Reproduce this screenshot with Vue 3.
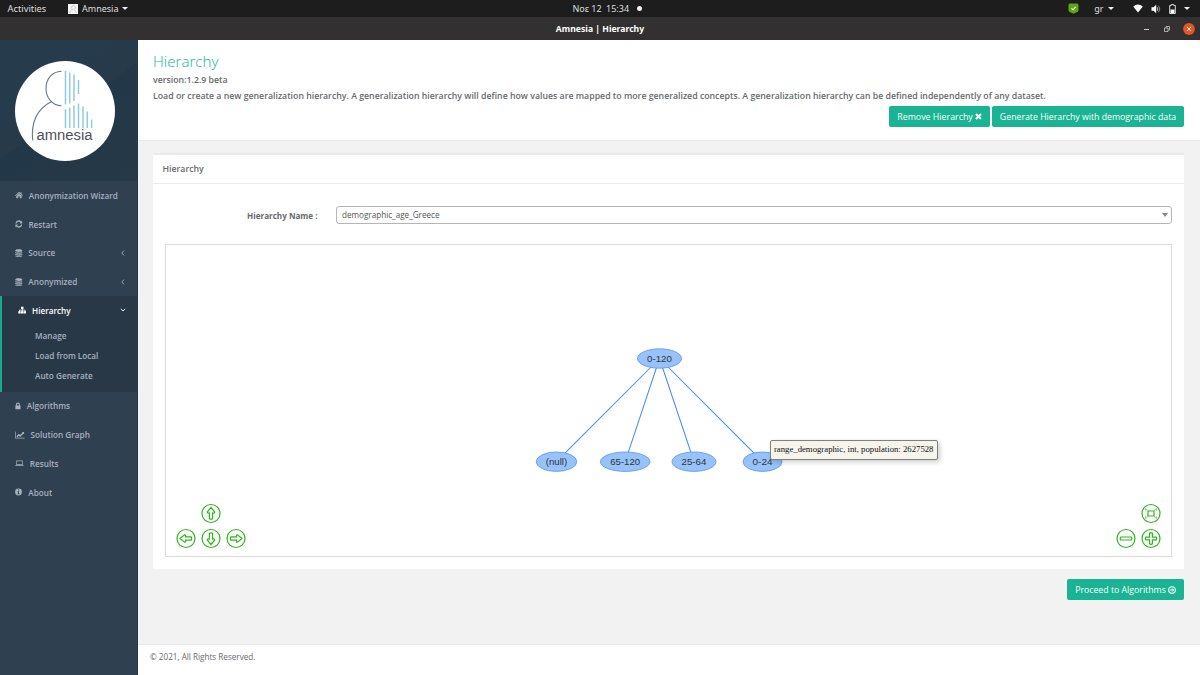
<template>
  <div class="desktop">
    <header class="topbar">
      <div class="topbar-left">
        <span class="activities">Activities</span>
        <svg class="app-icon" viewBox="0 0 10 10">
          <rect width="10" height="10" fill="#f4f4f4" />
          <path d="M5.500 1.500a2 2 0 0 0-.8 3.800C2.800 6 2 7 1.800 9M5.500 1.500c3 1 2 3 .5 4L8.500 8.500" fill="none" stroke="#bbb" stroke-width=".7" />
        </svg>
        <span class="app-name">Amnesia</span>
        <i class="caret"></i>
      </div>
      <div class="clock">
        <span class="clock-date">Νοε 12</span>
        <span class="clock-time">15:34</span>
        <i class="dot"></i>
      </div>
      <div class="tray">
        <svg class="shield" viewBox="0 0 11 11">
          <path d="M2 .5h7Q10.500.5 10.500 2v5.500Q10 9.500 7.500 9.800L5.500 10.800 3.500 9.800Q1 9.500.5 7.500V2Q.5.500 2 .5z" fill="#5fa614" />
          <path d="M3.500 5.300l1.500 1.500 2.700-3" fill="none" stroke="#fff" stroke-width="1.100" />
        </svg>
        <span class="lang">gr</span>
        <i class="caret"></i>
        <svg class="wifi" viewBox="0 0 10 9"><path d="M.2 2.500Q5-1.500 9.800 2.500L5 8.500z" fill="#fff" /></svg>
        <svg class="volume" viewBox="0 0 10 10">
          <path d="M.5 3.200h2L5.200.8v8.400L2.500 6.800h-2z" fill="#fff" />
          <path d="M6.200 3.200q1.300 1.800 0 3.600" fill="none" stroke="#ddd" stroke-width=".9" />
          <path d="M7.500 1.700q2.600 3.300 0 6.600" fill="none" stroke="#999" stroke-width=".9" />
        </svg>
        <svg class="battery" viewBox="0 0 7 10">
          <path d="M2.300.5h2.400v1H6.300v8H.7v-8h1.600z" fill="none" stroke="#ddd" />
          <path d="M1.500 5.500h4v3.500h-4z" fill="#fff" />
        </svg>
        <i class="caret"></i>
      </div>
    </header>

    <div class="titlebar">
      <span class="window-title">Amnesia | Hierarchy</span>
      <div class="window-buttons">
        <i class="minimize"></i>
        <svg class="restore" viewBox="0 0 6 6">
          <path d="M.5 2h3.500v3.500H.5zM2 1.800V.5h3.500V4H4.300" fill="none" stroke="#ccc" stroke-width=".8" />
        </svg>
        <svg class="close" viewBox="0 0 12 12">
          <circle cx="6" cy="6" r="5.900" fill="#e95420" />
          <path d="M4 4l4 4M8 4L4 8" stroke="#fff" stroke-width="1" />
        </svg>
      </div>
    </div>

    <div class="window">
      <nav class="sidebar">
        <div class="profile">
          <svg class="logo" viewBox="0 0 100 100">
            <circle cx="50" cy="50" r="50" fill="#fff" />
            <g fill="none" stroke="#64798a" stroke-width="1.100">
              <path d="M46.500 10.200C37 10.500 31 18 31 27.500S37.500 44.500 46.500 44.700" />
              <path d="M36.500 40.500C24 47 15.500 58 17.700 79.500" />
            </g>
            <path
              v-for="bar in logoBars"
              :key="bar"
              :d="bar"
              stroke="#8fcbe2"
              stroke-width="1.500"
            />
            <text x="21.500" y="79" textLength="56" lengthAdjust="spacingAndGlyphs">amnesia</text>
          </svg>
        </div>
        <ul class="menu">
          <li v-for="item in menu" :key="item.label" :class="{ active: item.children }">
            <a class="menu-link">
              <svg class="menu-icon" :style="{ width: item.width + 'px' }" :viewBox="`0 0 ${item.width} 8`">
                <path :d="icons[item.icon]" fill="currentColor" fill-rule="evenodd" />
              </svg>
              <span>{{ item.label }}</span>
              <svg v-if="item.arrow" class="arrow" viewBox="0 0 6 6">
                <path :d="item.arrow === 'down' ? 'M.8 1.800L3 4l2.200-2.200' : 'M4 .6L1.800 3 4 5.400'" fill="none" stroke="currentColor" stroke-width=".9" />
              </svg>
            </a>
            <ul v-if="item.children" class="submenu">
              <li v-for="child in item.children" :key="child">{{ child }}</li>
            </ul>
          </li>
        </ul>
      </nav>

      <main class="page">
        <section class="heading">
          <h2>Hierarchy</h2>
          <p class="version">version:1.2.9 beta</p>
          <p class="intro">Load or create a new generalization hierarchy. A generalization hierarchy will define how values are mapped to more generalized concepts. A generalization hierarchy can be defined independently of any dataset.</p>
          <div class="actions">
            <button class="btn remove">
              <span>Remove Hierarchy</span>
              <svg class="btn-x" viewBox="0 0 7 7"><path d="M1 1l5 5M6 1L1 6" stroke="#fff" stroke-width="2" /></svg>
            </button>
            <button class="btn generate">Generate Hierarchy with demographic data</button>
          </div>
        </section>

        <section class="content">
          <div class="panel">
            <div class="panel-title">Hierarchy</div>
            <div class="panel-body">
              <div class="form-row">
                <label>Hierarchy Name :</label>
                <div class="select">
                  <span>demographic_age_Greece</span>
                  <i class="select-caret"></i>
                </div>
              </div>
              <div class="network">
                <svg class="graph" viewBox="0 0 1005 311">
                  <line
                    v-for="node in leaves"
                    :key="'edge' + node.label"
                    :x1="root.x"
                    :y1="root.y"
                    :x2="node.x"
                    :y2="node.y"
                  />
                  <g v-for="node in [root, ...leaves]" :key="node.label">
                    <ellipse :cx="node.x" :cy="node.y" :rx="node.rx" ry="9.700" />
                    <text :x="node.x" :y="node.y + 3.200" :textLength="node.text" lengthAdjust="spacingAndGlyphs">{{ node.label }}</text>
                  </g>
                  <g v-for="nav in navButtons" :key="nav.name" :transform="`translate(${nav.x} ${nav.y})`" class="nav">
                    <circle r="9" />
                    <path :d="nav.path" :transform="`rotate(${nav.rotate || 0})`" />
                    <path v-if="nav.corners" :d="nav.corners" class="corners" />
                  </g>
                </svg>
                <div class="tooltip">range_demographic, int, population: 2627528</div>
              </div>
            </div>
          </div>
          <div class="proceed-row">
            <button class="btn proceed">
              <span>Proceed to Algorithms</span>
              <svg class="btn-arrow" viewBox="0 0 8 8">
                <circle cx="4" cy="4" r="3.300" fill="none" stroke="#fff" stroke-width="1.100" />
                <path d="M1.900 4h3.500M4 2.300L5.700 4 4 5.700" fill="none" stroke="#fff" stroke-width="1" />
              </svg>
            </button>
          </div>
        </section>

        <footer class="footer">© 2021, All Rights Reserved.</footer>
      </main>
    </div>
  </div>
</template>

<script setup>
const icons = {
  home: 'M4 .8L5.600 2.300V1.200h1v2L8 4.500l-.5.5L4 1.900.5 5 0 4.500zM4 2.600l2.700 2.500v2.200H4.800V5.200H3.200v2.100H1.300V5.100z',
  refresh: 'M.4 3.500C.8 0 5-.5 6.200 1.500L7.200.7v2.800H4.500l.9-1C4.500 1 2 1.500 1.600 3.500zM7.200 4.500C6.800 8 2.600 8.500 1.400 6.500l-1 .8V4.500h2.700l-.9 1C3.100 7 5.600 6.500 6 4.500z',
  database: 'M.3 1.300C.3-.2 7.200-.2 7.200 1.300v.8C7.200 3.300.3 3.300.3 2.100zM.3 2.900c1 .9 5.900.9 6.900 0v1.100C7.200 5.100.3 5.100.3 4zM.3 4.800c1 .8 5.900.8 6.900 0v1C7.200 6.900.3 6.900.3 5.800zM.3 6.500c1 .9 5.900.9 6.900 0v.4C7.200 8.300.3 8.300.3 6.900z',
  sitemap: 'M3 .8h2.500v2.300h-.8v.6h2.700v1.500h.8v2.200H5.800V5.200h.8v-.7H4.700v.7h.8v2.200H3V5.200h.8v-.7H1.900v.7h.8v2.200H.3V5.200h.8V3.700h2.700v-.6H3z',
  lock: 'M.4 3.600h.5V2.700C.9-.1 4.900-.1 4.900 2.700v.9h.6v3.700H.4zM1.900 3.600h2V2.700c0-1.400-2-1.400-2 0z',
  chart: 'M.2.8H.9v6h8.700v.7H.2zM1.500 5.200l2.300-2.400 1.300 1.300 2.400-2.400-.7-.7h2.300v2.300l-.7-.6-3.300 3.200-1.300-1.200-1.600 1.800z',
  laptop: 'M1.300 1.500h6.400v4.400H1.300zM2 2.200v3h5v-3zM.3 6.300h8.400v.8H.3z',
  info: 'M3.500.6a3.400 3.400 0 1 1 0 6.800 3.400 3.400 0 0 1 0-6.800zM3 1.500v1h1v-1zM2.500 3.200v.7H3v1.700h-.5v.7h2v-.7H4V3.200z'
}

const menu = [
  { label: 'Anonymization Wizard', icon: 'home', width: 8 },
  { label: 'Restart', icon: 'refresh', width: 7.6 },
  { label: 'Source', icon: 'database', width: 7.5, arrow: 'left' },
  { label: 'Anonymized', icon: 'database', width: 7.5, arrow: 'left' },
  {
    label: 'Hierarchy',
    icon: 'sitemap',
    width: 8.5,
    arrow: 'down',
    children: ['Manage', 'Load from Local', 'Auto Generate']
  },
  { label: 'Algorithms', icon: 'lock', width: 6 },
  { label: 'Solution Graph', icon: 'chart', width: 9.7 },
  { label: 'Results', icon: 'laptop', width: 9 },
  { label: 'About', icon: 'info', width: 7.5 }
]

const logoBars = [
  'M50.500 9.800V43.500', 'M54.700 11.500V42.500', 'M59 13.800V40', 'M63.500 19V33',
  'M50.500 48V67', 'M54.700 46.500V67', 'M59 44.500V67', 'M63.500 42.500V67',
  'M68 45.500V67', 'M72.300 50.500V67', 'M76.600 58.500V67'
]

const root = { label: '0-120', x: 493.5, y: 113.5, rx: 22, text: 25 }
const leaves = [
  { label: '(null)', x: 390.5, y: 216.7, rx: 20.3, text: 21.5 },
  { label: '65-120', x: 459.2, y: 216.7, rx: 24.8, text: 30 },
  { label: '25-64', x: 528, y: 216.7, rx: 22, text: 25 },
  { label: '0-24', x: 596.5, y: 216.7, rx: 19.5, text: 20 }
]

const arrow = 'M0-6L3.700-1.500Q3.600 0 1.600-.4V5.200Q0 6.200-1.600 5.200V-.4Q-3.600 0-3.700-1.500z'
const navButtons = [
  { name: 'up', x: 45, y: 268.5, path: arrow },
  { name: 'left', x: 20, y: 293.5, path: arrow, rotate: -90 },
  { name: 'down', x: 45, y: 293.5, path: arrow, rotate: 180 },
  { name: 'right', x: 70, y: 293.5, path: arrow, rotate: 90 },
  { name: 'out', x: 960, y: 293.5, path: 'M-5.200-1.500H5.200Q6.600 0 5.200 1.500H-5.200Q-6.600 0-5.200-1.500z' },
  { name: 'in', x: 985, y: 293.5, path: 'M-1.400-5.200Q0-6.400 1.400-5.200V-1.400H5.200Q6.400 0 5.200 1.400H1.400V5.200Q0 6.400-1.400 5.200V1.400H-5.200Q-6.400 0-5.200-1.400H-1.400z' },
  { name: 'fit', x: 985, y: 268.5, path: 'M-3-2.500H3V2.500H-3z', corners: 'M-5.500-2.800V-5L-3-3M5.500-2.800V-5L3-3M-5.500 2.800V5L-3 3M5.500 2.800V5L3 3' }
]
</script>

<style>
body {
  margin: 0;
  overflow: hidden;
}
</style>

<style scoped>
* {
  box-sizing: border-box;
}
.desktop {
  width: 1200px;
  height: 675px;
  display: flex;
  flex-direction: column;
  font-family: "Open Sans", sans-serif;
  font-size: 8.75px;
  color: #676a6c;
}
svg {
  display: block;
  flex: none;
}
h2,
p,
ul {
  margin: 0;
  padding: 0;
  list-style: none;
}
.topbar {
  height: 17px;
  flex: none;
  display: grid;
  grid-template-columns: 1fr auto 1fr;
  align-items: center;
  background: #1d1d1d;
  color: #dedede;
  font-family: "Noto Sans", sans-serif;
  font-size: 9px;
  white-space: nowrap;
}
.topbar-left,
.clock,
.tray {
  display: flex;
  align-items: center;
}
.topbar-left {
  padding-left: 7.5px;
}
.activities {
  width: 60.5px;
  font-size: 9.3px;
}
.app-icon {
  width: 10px;
  height: 10px;
  margin-right: 4px;
}
.caret {
  border: 3px solid transparent;
  border-top: 3.5px solid #f0f0f0;
  border-bottom: 0;
}
.app-name {
  margin-right: 3px;
}
.clock {
  padding-left: 14px;
}
.clock-time {
  margin-left: 4.5px;
}
.dot {
  width: 5px;
  height: 5px;
  margin-left: 7.5px;
  border-radius: 50%;
  background: #f2f2f2;
}
.tray {
  justify-content: flex-end;
  padding-right: 10px;
}
.shield {
  width: 11px;
  height: 11px;
  margin-right: 15px;
}
.lang {
  margin-right: 4px;
}
.wifi {
  width: 10px;
  height: 9px;
  margin: 0 8px 0 19.5px;
}
.volume {
  width: 10px;
  height: 10px;
  margin-right: 8px;
}
.battery {
  width: 7px;
  height: 10px;
  margin-right: 8px;
}
.titlebar {
  height: 23px;
  flex: none;
  display: grid;
  grid-template-columns: 1fr auto 1fr;
  align-items: center;
  background: #323030;
  color: #fff;
}
.window-title {
  grid-column: 2;
  font: bold 8.65px "Noto Sans", sans-serif;
}
.window-buttons {
  display: flex;
  justify-content: flex-end;
  align-items: center;
  padding-right: 5.5px;
}
.minimize {
  width: 5px;
  height: 1px;
  margin: 2px 15.5px 0 0;
  background: #ccc;
}
.restore {
  width: 6px;
  height: 6px;
  margin-right: 12.5px;
}
.close {
  width: 12px;
  height: 12px;
}
.window {
  flex: 1;
  display: flex;
  min-height: 0;
}
.sidebar {
  width: 137.5px;
  flex: none;
  background: #2f4050;
  border-right: 1px solid #263849;
}
.profile {
  height: 141px;
  padding: 20.5px 0 0 15.4px;
  background: linear-gradient(145deg, #263c4d, #263a4a 50%, #223747 50.5%, #263949);
}
.logo {
  width: 100px;
  height: 100px;
}
.logo text {
  font: 15.5px "Liberation Sans", sans-serif;
  fill: #50505a;
}
.menu {
  color: #a7b1c2;
  font-weight: 600;
  font-size: 8.2px;
}
.menu-link {
  height: 28.75px;
  display: flex;
  align-items: center;
  padding: 0 10.5px 0 15px;
}
.menu-icon {
  height: 8px;
  margin-right: 5.8px;
}
.arrow {
  width: 6px;
  height: 6px;
  margin-left: auto;
}
.active {
  height: 95.5px;
  border-left: 2.5px solid #19aa8d;
  background: #293846;
}
.active .menu-link {
  padding-left: 15.7px;
  color: #fff;
}
.submenu {
  padding-left: 33px;
  color: #a7b1c2;
}
.submenu li {
  height: 20px;
  line-height: 21px;
}
.page {
  flex: 1;
  display: flex;
  flex-direction: column;
  min-width: 0;
  background: #f2f2f2;
}
.heading {
  height: 100.5px;
  flex: none;
  padding: 11px 16px 0 15.5px;
  background: #fff;
  border-bottom: 1px solid #e7eaec;
}
h2 {
  font-size: 15.1px;
  font-weight: 300;
  line-height: 21px;
  color: #1ab394;
}
.version,
.intro {
  font-weight: 600;
  line-height: 16px;
  white-space: nowrap;
}
.actions {
  display: flex;
  justify-content: flex-end;
  gap: 2px;
  margin-top: 2.2px;
}
.btn {
  height: 21px;
  display: flex;
  align-items: center;
  justify-content: center;
  gap: 2px;
  padding: 0;
  border: 0;
  border-radius: 2px;
  background: #1ab394;
  color: #fff;
  font: 8.75px "Open Sans", sans-serif;
  white-space: nowrap;
}
.remove {
  width: 101px;
  font-size: 8.85px;
}
.generate {
  width: 192px;
}
.btn-x {
  width: 7px;
  height: 7px;
}
.content {
  flex: 1;
  padding: 12.5px 16px 0 15.5px;
}
.panel {
  height: 416px;
  background: #fff;
  border-top: 2px solid #e7eaec;
}
.panel-title {
  height: 28.5px;
  line-height: 28.5px;
  padding-left: 9.5px;
  border-bottom: 1px solid #e9ebed;
  font-weight: 600;
}
.panel-body {
  padding: 22px 12px 0 12.5px;
}
.form-row {
  height: 38px;
  display: flex;
  align-items: flex-start;
}
label {
  width: 170.5px;
  padding-right: 18.5px;
  text-align: right;
  font-size: 8.1px;
  font-weight: 700;
  line-height: 20px;
}
.select {
  flex: 1;
  height: 18px;
  display: flex;
  align-items: center;
  justify-content: space-between;
  padding: 0 3.5px 0 5px;
  border: 1px solid #b5b5b5;
  border-radius: 3px;
  color: #555;
  font-size: 8.15px;
}
.select-caret {
  border: 3px solid transparent;
  border-top: 4px solid #888;
  border-bottom: 0;
}
.network {
  position: relative;
  height: 313px;
  margin-left: -.6px;
  border: 1px solid #dadada;
}
.graph {
  width: 1005px;
  height: 311px;
}
.graph line {
  stroke: #4387f0;
  stroke-width: 1.01;
}
.graph ellipse {
  fill: #97c2fc;
  stroke: #5a91ed;
  stroke-width: .8;
}
.graph text {
  font: 9.5px "Liberation Sans", sans-serif;
  fill: #343434;
  text-anchor: middle;
}
.nav circle,
.nav path {
  fill: none;
  stroke: #2fb51c;
  stroke-width: 1.2;
}
.nav .corners {
  stroke: #85aa7d;
  stroke-width: .8;
}
.tooltip {
  position: absolute;
  left: 604px;
  top: 195px;
  width: 168px;
  height: 20px;
  padding-left: 3px;
  background: #f5f4ed;
  border: 1px solid #808074;
  border-radius: 2px;
  box-shadow: 2px 2px 5px rgba(0, 0, 0, .2);
  color: #111;
  font: 8.72px/17px "Liberation Serif", serif;
  white-space: nowrap;
}
.proceed-row {
  display: flex;
  justify-content: flex-end;
  padding-top: 10.4px;
}
.proceed {
  width: 117px;
}
.btn-arrow {
  width: 8px;
  height: 8px;
}
.footer {
  height: 31px;
  padding-left: 12.5px;
  line-height: 24px;
  background: #fff;
  border-top: 1px solid #e7eaec;
  font-size: 8.15px;
}
</style>
